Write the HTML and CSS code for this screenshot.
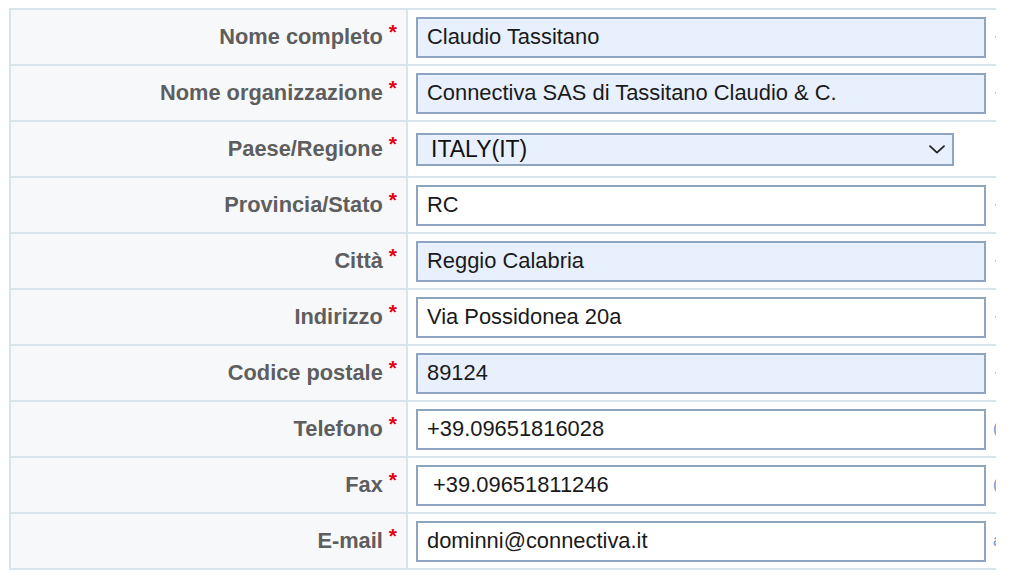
FILE: index.html
```html
<!DOCTYPE html>
<html lang="it">
<head>
<meta charset="utf-8">
<title>Dati di contatto</title>
<link rel="stylesheet" href="styles.css">
</head>
<body>
<div class="page">
  <div class="form">
    <div class="label">Nome completo<span class="req">*</span></div>
    <div class="field"><input class="input autofill" type="text" value="Claudio Tassitano"><span class="hint muted">·</span></div>

    <div class="label">Nome organizzazione<span class="req">*</span></div>
    <div class="field"><input class="input autofill" type="text" value="Connectiva SAS di Tassitano Claudio &amp; C."><span class="hint muted">·</span></div>

    <div class="label">Paese/Regione<span class="req">*</span></div>
    <div class="field">
      <span class="select-wrap">
        <select class="select autofill"><option>ITALY(IT)</option></select>
        <svg class="chevron" width="16" height="9" viewBox="0 0 16 9"><path d="M1 1.2 L8 7.6 L15 1.2" fill="none" stroke="#222" stroke-width="1.8" stroke-linecap="round" stroke-linejoin="round"/></svg>
      </span>
    </div>

    <div class="label">Provincia/Stato<span class="req">*</span></div>
    <div class="field"><input class="input" type="text" value="RC"><span class="hint muted">·</span></div>

    <div class="label">Città<span class="req">*</span></div>
    <div class="field"><input class="input autofill" type="text" value="Reggio Calabria"><span class="hint muted">·</span></div>

    <div class="label">Indirizzo<span class="req">*</span></div>
    <div class="field"><input class="input" type="text" value="Via Possidonea 20a"><span class="hint muted">·</span></div>

    <div class="label">Codice postale<span class="req">*</span></div>
    <div class="field"><input class="input autofill" type="text" value="89124"><span class="hint muted">·</span></div>

    <div class="label">Telefono<span class="req">*</span></div>
    <div class="field"><input class="input" type="text" value="+39.09651816028"><span class="hint">(</span></div>

    <div class="label">Fax<span class="req">*</span></div>
    <div class="field"><input class="input" type="text" value=" +39.09651811246"><span class="hint">(</span></div>

    <div class="label">E-mail<span class="req">*</span></div>
    <div class="field"><input class="input" type="text" value="dominni@connectiva.it"><span class="hint">a</span></div>
  </div>
</div>
</body>
</html>
```

FILE: styles.css
```css
* {
  box-sizing: border-box;
}

body {
  margin: 0;
  background: #ffffff;
  font-family: "Liberation Sans", Arial, Helvetica, sans-serif;
}

.page {
  padding: 8px 0 0 9px;
}

.form {
  display: grid;
  grid-template-columns: 397px 1fr;
  grid-auto-rows: 56px;
  width: 987px;
  border-top: 2px solid #d8e4eb;
  border-left: 2px solid #d8e4eb;
  overflow: hidden;
}

.label {
  display: flex;
  align-items: center;
  justify-content: flex-end;
  padding-right: 9px;
  background: #f7f8fa;
  border-right: 2px solid #d8e4eb;
  border-bottom: 2px solid #d8e4eb;
  font-size: 21.8px;
  font-weight: bold;
  color: #5e5e5e;
  white-space: nowrap;
}

.req {
  position: relative;
  top: -5px;
  margin-left: 6px;
  font-size: 21px;
  color: #e8000c;
}

.field {
  display: flex;
  align-items: center;
  padding-left: 8px;
  border-bottom: 2px solid #d8e4eb;
  background: #ffffff;
  white-space: nowrap;
}

.input {
  flex: none;
  width: 570px;
  height: 41px;
  padding: 0 9px;
  border: 2px solid #8ea5c2;
  border-radius: 0;
  background: #ffffff;
  font-family: inherit;
  font-size: 21.9px;
  color: #1a1a1a;
  outline: none;
}

.autofill {
  background: #e8f0fe;
}

.select-wrap {
  position: relative;
  display: inline-block;
}

.select {
  display: block;
  width: 538px;
  height: 33px;
  padding: 0 40px 0 13px;
  border: 2px solid #8ea5c2;
  border-radius: 0;
  background: #e8f0fe;
  font-family: inherit;
  font-size: 23px;
  color: #111111;
  appearance: none;
  -webkit-appearance: none;
  outline: none;
}

.chevron {
  position: absolute;
  right: 9px;
  top: 12px;
  pointer-events: none;
}

.hint {
  margin-left: 7px;
  font-size: 16px;
  color: #5a9bd8;
}

.hint.muted {
  color: #b7c2cc;
}
```
